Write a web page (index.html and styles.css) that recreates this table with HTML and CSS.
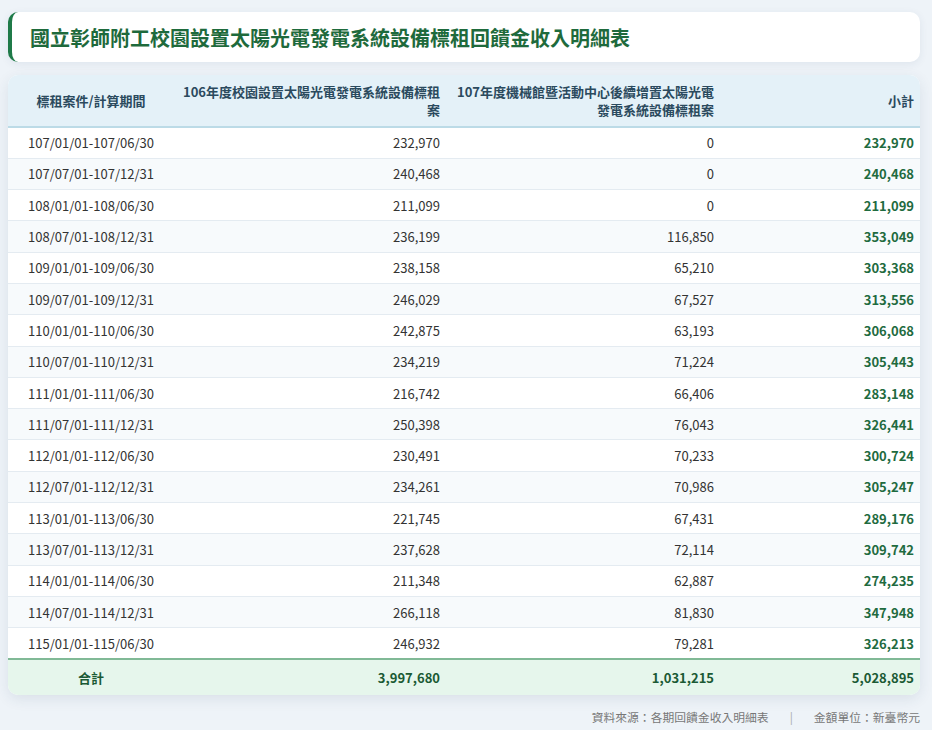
FILE: index.html
```html
<!DOCTYPE html>
<html lang="zh-Hant">
<head>
<meta charset="utf-8">
<title>國立彰師附工校園設置太陽光電發電系統設備標租回饋金收入明細表</title>
<link rel="stylesheet" href="styles.css">
</head>
<body>
<div class="page">
  <header class="title-card">
    <h1>國立彰師附工校園設置太陽光電發電系統設備標租回饋金收入明細表</h1>
  </header>
  <section class="table-card">
    <table class="data">
      <colgroup>
        <col class="c1"><col class="c2"><col class="c3"><col class="c4">
      </colgroup>
      <thead>
        <tr>
          <th class="center">標租案件/計算期間</th>
          <th class="num">106年度校園設置太陽光電發電系統設備標租案</th>
          <th class="num">107年度機械館暨活動中心後續增置太陽光電發電系統設備標租案</th>
          <th class="num">小計</th>
        </tr>
      </thead>
      <tbody>
        <tr><td class="center">107/01/01-107/06/30</td><td class="num">232,970</td><td class="num">0</td><td class="num sub">232,970</td></tr>
        <tr><td class="center">107/07/01-107/12/31</td><td class="num">240,468</td><td class="num">0</td><td class="num sub">240,468</td></tr>
        <tr><td class="center">108/01/01-108/06/30</td><td class="num">211,099</td><td class="num">0</td><td class="num sub">211,099</td></tr>
        <tr><td class="center">108/07/01-108/12/31</td><td class="num">236,199</td><td class="num">116,850</td><td class="num sub">353,049</td></tr>
        <tr><td class="center">109/01/01-109/06/30</td><td class="num">238,158</td><td class="num">65,210</td><td class="num sub">303,368</td></tr>
        <tr><td class="center">109/07/01-109/12/31</td><td class="num">246,029</td><td class="num">67,527</td><td class="num sub">313,556</td></tr>
        <tr><td class="center">110/01/01-110/06/30</td><td class="num">242,875</td><td class="num">63,193</td><td class="num sub">306,068</td></tr>
        <tr><td class="center">110/07/01-110/12/31</td><td class="num">234,219</td><td class="num">71,224</td><td class="num sub">305,443</td></tr>
        <tr><td class="center">111/01/01-111/06/30</td><td class="num">216,742</td><td class="num">66,406</td><td class="num sub">283,148</td></tr>
        <tr><td class="center">111/07/01-111/12/31</td><td class="num">250,398</td><td class="num">76,043</td><td class="num sub">326,441</td></tr>
        <tr><td class="center">112/01/01-112/06/30</td><td class="num">230,491</td><td class="num">70,233</td><td class="num sub">300,724</td></tr>
        <tr><td class="center">112/07/01-112/12/31</td><td class="num">234,261</td><td class="num">70,986</td><td class="num sub">305,247</td></tr>
        <tr><td class="center">113/01/01-113/06/30</td><td class="num">221,745</td><td class="num">67,431</td><td class="num sub">289,176</td></tr>
        <tr><td class="center">113/07/01-113/12/31</td><td class="num">237,628</td><td class="num">72,114</td><td class="num sub">309,742</td></tr>
        <tr><td class="center">114/01/01-114/06/30</td><td class="num">211,348</td><td class="num">62,887</td><td class="num sub">274,235</td></tr>
        <tr><td class="center">114/07/01-114/12/31</td><td class="num">266,118</td><td class="num">81,830</td><td class="num sub">347,948</td></tr>
        <tr><td class="center">115/01/01-115/06/30</td><td class="num">246,932</td><td class="num">79,281</td><td class="num sub">326,213</td></tr>
      </tbody>
      <tfoot>
        <tr><td class="center">合計</td><td class="num">3,997,680</td><td class="num">1,031,215</td><td class="num">5,028,895</td></tr>
      </tfoot>
    </table>
  </section>
  <footer class="note">
    <span>資料來源：各期回饋金收入明細表</span>
    <span class="sep">|</span>
    <span>金額單位：新臺幣元</span>
  </footer>
</div>
</body>
</html>
```

FILE: styles.css
```css
* { box-sizing: border-box; }
html, body { margin: 0; padding: 0; }
body {
  background: #eef3f8;
  font-family: "Noto Sans CJK TC", "Noto Sans", sans-serif;
  color: #333;
}
.page {
  padding: 12px 12px 0 8px;
  display: flex;
  flex-direction: column;
  gap: 13px;
}
.title-card {
  background: #fff;
  border-left: 4px solid #1f7a48;
  border-radius: 10px;
  height: 50px;
  display: flex;
  align-items: center;
  padding-left: 18px;
  box-shadow: 0 2px 8px rgba(40, 70, 100, 0.08);
}
.title-card h1 {
  margin: 0;
  font-size: 20px;
  font-weight: 700;
  color: #1e6a3c;
  letter-spacing: 0;
}
.table-card {
  background: #fff;
  border-radius: 10px;
  overflow: hidden;
  box-shadow: 0 4px 14px rgba(40, 70, 100, 0.10);
}
.data {
  width: 100%;
  border-collapse: collapse;
  table-layout: fixed;
  font-size: 13px;
}
col.c1 { width: 166px; }
col.c2 { width: 272px; }
col.c3 { width: 274px; }
col.c4 { width: 200px; }
.data th, .data td {
  padding: 0 6px;
}
.data thead th {
  background: #e4f1f8;
  color: #2b4a5e;
  font-weight: 700;
  height: 52px;
  line-height: 18px;
  border-bottom: 2px solid #bcdbe7;
  vertical-align: middle;
}
.data tbody td {
  height: 31.3px;
  border-bottom: 1px solid #e4ebf1;
  color: #333;
}
.data tbody tr:nth-child(even) td { background: #f7fafc; }
.data tbody tr:last-child td { border-bottom: none; }
.center { text-align: center; }
.num { text-align: right; }
.data td.sub { color: #1f6b3f; font-weight: 700; }
.data tfoot td {
  background: #e6f6ec;
  border-top: 2px solid #80b996;
  height: 36px;
  font-weight: 700;
  color: #1b5a34;
}
.note {
  display: flex;
  justify-content: flex-end;
  gap: 21px;
  font-size: 11.8px;
  color: #777;
  margin-top: 0;
}
.note .sep { color: #aaa; }
```
